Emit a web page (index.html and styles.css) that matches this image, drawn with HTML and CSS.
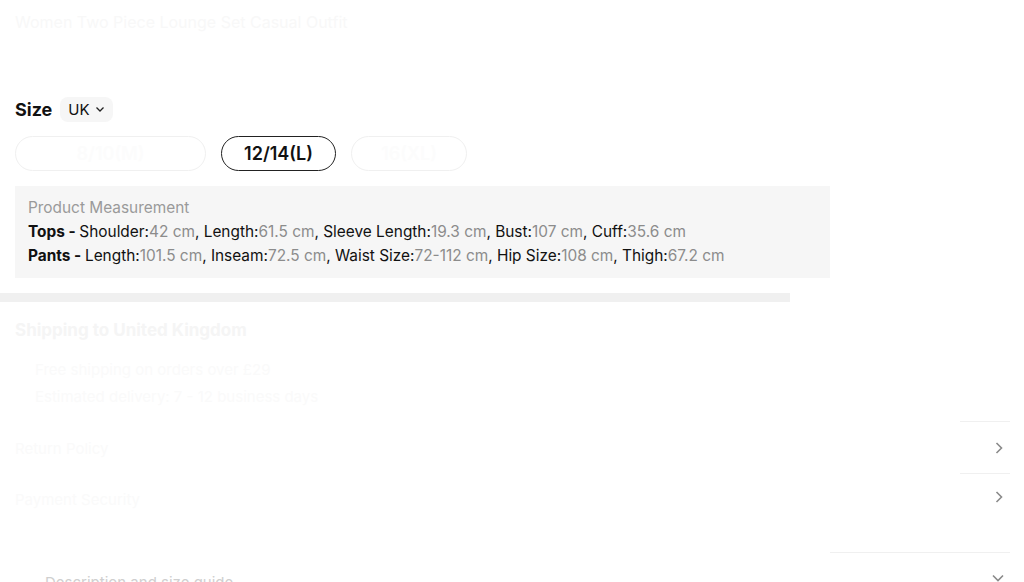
FILE: index.html
```html
<!DOCTYPE html>
<html lang="en">
<head>
    <meta charset="UTF-8">
    <meta name="viewport" content="width=device-width, initial-scale=1.0">
    <title>Size Picker</title>
    <link rel="stylesheet" href="styles.css">
</head>
<body>
    <div class="page">
        <p class="faint-title">Women Two Piece Lounge Set Casual Outfit</p>

        <div class="size-head">
            <span class="size-label">Size</span>
            <span class="unit-chip">UK
                <svg width="10" height="10" viewBox="0 0 10 10"><path d="M1.5 3.5 L5 7 L8.5 3.5" fill="none" stroke="#222" stroke-width="1.3"/></svg>
            </span>
        </div>

        <div class="pill-row">
            <button class="pill faded wide">8/10(M)</button>
            <button class="pill active">12/14(L)</button>
            <button class="pill faded">16(XL)</button>
        </div>

        <div class="measure">
            <p class="measure-title">Product Measurement</p>
            <p class="measure-line"><b>Tops - </b>Shoulder:<span>42 cm</span>, Length:<span>61.5 cm</span>, Sleeve Length:<span>19.3 cm</span>, Bust:<span>107 cm</span>, Cuff:<span>35.6 cm</span></p>
            <p class="measure-line"><b>Pants - </b>Length:<span>101.5 cm</span>, Inseam:<span>72.5 cm</span>, Waist Size:<span>72-112 cm</span>, Hip Size:<span>108 cm</span>, Thigh:<span>67.2 cm</span></p>
        </div>
    </div>

    <div class="gap-bar"></div>

    <div class="page">
        <p class="faint-heading">Shipping to United Kingdom</p>

        <div class="row row-first line-short">
            <div class="faint-stack">
                <span class="faint-text">Free shipping on orders over £29</span>
                <span class="faint-text">Estimated delivery: 7 - 12 business days</span>
            </div>
        </div>
        <div class="row line-short">
            <span class="faint-text">Return Policy</span>
            <svg class="chev" width="12" height="14" viewBox="0 0 12 14"><path d="M3.5 2 L8.5 7 L3.5 12" fill="none" stroke="#8a8a8a" stroke-width="1.6"/></svg>
        </div>
        <div class="row row-tall line-long">
            <span class="faint-text">Payment Security</span>
            <svg class="chev" width="12" height="14" viewBox="0 0 12 14"><path d="M3.5 2 L8.5 7 L3.5 12" fill="none" stroke="#8a8a8a" stroke-width="1.6"/></svg>
        </div>
        <div class="row row-last">
            <span class="desc-text"><i class="badge"></i>Description and size guide</span>
            <svg class="chev" width="14" height="10" viewBox="0 0 14 10"><path d="M2 2.5 L7 7.5 L12 2.5" fill="none" stroke="#8a8a8a" stroke-width="1.6"/></svg>
        </div>
    </div>
</body>
</html>
```

FILE: styles.css
```css
body {
    font-family: Inter, "Noto Sans", sans-serif;
    background-color: #ffffff;
    color: #111;
    margin: 0;
    overflow: hidden;
}

p {
    margin: 0;
}

.page {
    padding: 0 14px 0 15px;
}

.faint-title {
    color: #f8f8f8;
    font-size: 16px;
    padding-top: 12px;
    height: 97px;
    box-sizing: border-box;
}

.size-head {
    display: flex;
    align-items: center;
    gap: 8px;
    height: 24px;
}

.size-label {
    font-size: 18px;
    font-weight: 700;
}

.unit-chip {
    display: flex;
    align-items: center;
    gap: 5px;
    background: #f6f6f6;
    border-radius: 8px;
    padding: 3px 8px;
    font-size: 15px;
}

.pill-row {
    display: flex;
    gap: 15px;
    margin-top: 15px;
}

.pill {
    font-family: inherit;
    font-size: 18px;
    font-weight: 600;
    height: 35px;
    padding: 0 20px;
    border-radius: 18px;
    background: #fff;
    color: #111;
    border: 1.5px solid #222;
}

.pill.faded {
    color: #fcfcfc;
    border-color: #f0f0f0;
    width: 116px;
}

.pill.wide {
    width: 191px;
}

.pill.active {
    width: 115px;
    padding: 0;
}

.measure {
    background: #f6f6f6;
    margin-top: 15px;
    width: 815px;
    padding: 12px 13px 10px;
    box-sizing: border-box;
}

.measure-title {
    color: #9a9a9a;
    font-size: 15.4px;
    line-height: 20px;
}

.measure-line {
    font-size: 15.4px;
    line-height: 24px;
    color: #111;
}

.measure-line:nth-child(2) {
    margin-top: 2px;
}

.measure-line span {
    color: #8c8c8c;
}

.gap-bar {
    background: #f0f0f0;
    height: 9px;
    width: 790px;
    margin-top: 15px;
}

.faint-heading {
    color: #f5f5f5;
    font-size: 17px;
    font-weight: 700;
    line-height: 20px;
    margin-top: 18px;
}

.row {
    display: flex;
    align-items: center;
    justify-content: space-between;
    height: 52px;
}

.line-short {
    background: linear-gradient(#f0f0f0, #f0f0f0) no-repeat right bottom / 50px 1px;
}

.line-long {
    background: linear-gradient(#f0f0f0, #f0f0f0) no-repeat right bottom / 180px 1px;
}

.faint-stack {
    display: flex;
    flex-direction: column;
    gap: 8px;
    padding: 20px 0 0 20px;
}

.faint-text {
    color: #fafafa;
    font-size: 15px;
}

.row-first {
    height: 82px;
    align-items: flex-start;
}

.row-tall {
    height: 79px;
    align-items: flex-start;
    padding-top: 16px;
    box-sizing: border-box;
}

.row-last {
    align-items: flex-start;
    padding-top: 20px;
    box-sizing: border-box;
}

.desc-text {
    color: #cfcfcf;
    font-size: 15px;
}

.chev {
    margin-left: auto;
    margin-right: 5px;
}

.badge {
    display: inline-block;
    width: 18px;
    height: 4px;
    background: #bcd9df;
    margin-right: 12px;
    vertical-align: middle;
}
```
